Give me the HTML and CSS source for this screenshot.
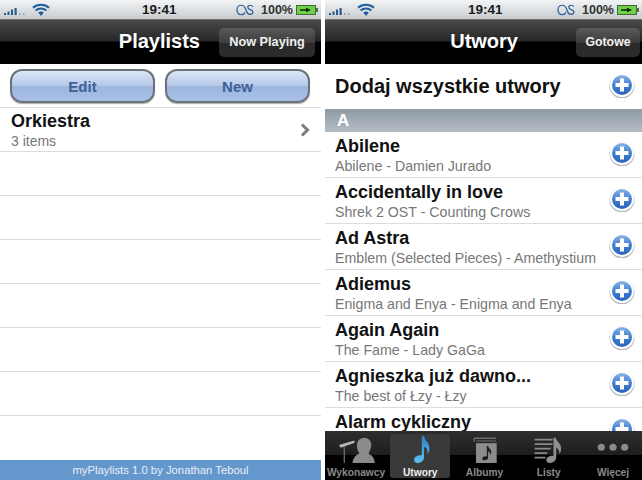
FILE: index.html
```html
<!DOCTYPE html>
<html lang="pl">
<head>
<meta charset="UTF-8">
<title>myPlaylists</title>
<link rel="stylesheet" href="styles.css">
</head>
<body>
<svg class="defs" width="0" height="0">
<defs>
<linearGradient id="plusFill" x1="0" y1="0" x2="0" y2="1">
<stop offset="0" stop-color="#8fb4e6"/>
<stop offset="0.5" stop-color="#3f7fd4"/>
<stop offset="1" stop-color="#2a63b8"/>
</linearGradient>
<linearGradient id="noteFill" x1="0" y1="0" x2="0" y2="1">
<stop offset="0" stop-color="#2f7fc4"/>
<stop offset="1" stop-color="#5cc4f2"/>
</linearGradient>
<symbol id="plus" viewBox="0 0 26 26">
<circle cx="13" cy="14" r="12.5" fill="#b4b8bd"/>
<circle cx="13" cy="13" r="12" fill="#fff"/>
<circle cx="13" cy="13" r="10" fill="url(#plusFill)"/>
<path d="M11 6.500h4V11h4.500v4H15v4.500h-4V15H6.500v-4H11z" fill="#fff"/>
</symbol>
<symbol id="signal" viewBox="0 0 24 8">
<path d="M1 6h2v2H1zM4.500 4.500h2V8h-2zM8 2.500h2V8H8zM11.500 1h2.200v7h-2.200z" fill="#2a5a8c"/>
<path d="M16 6.500h1.500V8H16zM20 6.500h1.500V8H20z" fill="#7a92aa"/>
</symbol>
<symbol id="wifi" viewBox="0 0 18 13">
<path d="M9 13 6.200 9.600a4.500 4.500 0 0 1 5.600 0z" fill="#1f5f9c"/>
<path d="M1 4.800a12 12 0 0 1 16 0M3.600 7.600a8 8 0 0 1 10.800 0" fill="none" stroke="#1f5f9c" stroke-width="2"/>
</symbol>
<symbol id="lastfm" viewBox="0 0 20 12">
<path d="M9.500 8.500C8.600 10.300 7.200 11 5.600 11 3 11 1 9.100 1 6s2-5 4.600-5c3.900 0 4 3 5.500 6.500 .7 1.800 1.900 3 3.500 3 1.700 0 3.200-.7 3.200-2.400 0-3-5.400-2-5.400-5C12.400 1.800 13.600 1 15 1c1.300 0 2.200.5 2.800 1.600" fill="none" stroke="#2a5f9a" stroke-width="1.300"/>
</symbol>
<symbol id="battery" viewBox="0 0 22 10">
<rect x="0.500" y="0.500" width="19" height="9" fill="#6fd04a" stroke="#3f6a36"/>
<rect x="20" y="3" width="2" height="4" fill="#55704e"/>
<path d="M4 4.200h6V2.800l5 2.200-5 2.200V5.800H4z" fill="#10240c"/>
</symbol>
<symbol id="chevron" viewBox="0 0 10 14">
<path d="M2 1.500 7.500 7 2 12.500" fill="none" stroke="#7c7c7c" stroke-width="3"/>
</symbol>
</defs>
</svg>

<div class="screens">
  <section class="phone phone-left">
    <div class="status">
      <svg class="ic-signal"><use href="#signal"/></svg>
      <svg class="ic-wifi"><use href="#wifi"/></svg>
      <span class="clock">19:41</span>
      <svg class="ic-lastfm"><use href="#lastfm"/></svg>
      <span class="percent">100%</span>
      <svg class="ic-battery"><use href="#battery"/></svg>
    </div>
    <header class="nav">
      <span class="nav-title title-playlists">Playlists</span>
      <button class="nav-btn btn-playing">Now Playing</button>
    </header>
    <div class="actions">
      <button class="action-btn">Edit</button>
      <button class="action-btn">New</button>
    </div>
    <div class="playlist-list">
      <div class="playlist-row first-row">
        <div class="row-text">
          <div class="row-title">Orkiestra</div>
          <div class="row-sub">3 items</div>
        </div>
        <svg class="ic-chevron"><use href="#chevron"/></svg>
      </div>
      <div class="playlist-row"></div>
      <div class="playlist-row"></div>
      <div class="playlist-row"></div>
      <div class="playlist-row"></div>
      <div class="playlist-row"></div>
      <div class="playlist-row"></div>
    </div>
    <footer class="credit">myPlaylists 1.0 by Jonathan Teboul</footer>
  </section>

  <section class="phone phone-right">
    <div class="status">
      <svg class="ic-signal"><use href="#signal"/></svg>
      <svg class="ic-wifi"><use href="#wifi"/></svg>
      <span class="clock">19:41</span>
      <svg class="ic-lastfm"><use href="#lastfm"/></svg>
      <span class="percent">100%</span>
      <svg class="ic-battery"><use href="#battery"/></svg>
    </div>
    <header class="nav">
      <span class="nav-title title-utwory">Utwory</span>
      <button class="nav-btn btn-done">Gotowe</button>
    </header>
    <div class="track-list">
      <div class="add-all">
        <span class="add-all-text">Dodaj wszystkie utwory</span>
        <svg class="ic-plus"><use href="#plus"/></svg>
      </div>
      <div class="section-head">A</div>
      <div class="track">
        <div class="row-text"><div class="track-title">Abilene</div><div class="track-sub">Abilene - Damien Jurado</div></div>
        <svg class="ic-plus"><use href="#plus"/></svg>
      </div>
      <div class="track">
        <div class="row-text"><div class="track-title">Accidentally in love</div><div class="track-sub">Shrek 2 OST - Counting Crows</div></div>
        <svg class="ic-plus"><use href="#plus"/></svg>
      </div>
      <div class="track">
        <div class="row-text"><div class="track-title">Ad Astra</div><div class="track-sub">Emblem (Selected Pieces) - Amethystium</div></div>
        <svg class="ic-plus"><use href="#plus"/></svg>
      </div>
      <div class="track">
        <div class="row-text"><div class="track-title">Adiemus</div><div class="track-sub">Enigma and Enya - Enigma and Enya</div></div>
        <svg class="ic-plus"><use href="#plus"/></svg>
      </div>
      <div class="track">
        <div class="row-text"><div class="track-title">Again Again</div><div class="track-sub">The Fame - Lady GaGa</div></div>
        <svg class="ic-plus"><use href="#plus"/></svg>
      </div>
      <div class="track">
        <div class="row-text"><div class="track-title">Agnieszka już dawno...</div><div class="track-sub">The best of Łzy - Łzy</div></div>
        <svg class="ic-plus"><use href="#plus"/></svg>
      </div>
      <div class="track">
        <div class="row-text"><div class="track-title">Alarm cykliczny</div><div class="track-sub"></div></div>
        <svg class="ic-plus"><use href="#plus"/></svg>
      </div>
    </div>
    <nav class="tabbar">
      <div class="tab">
        <svg class="tab-icon" viewBox="0 0 44 30">
          <path d="M18 30c1-7 5-9 8-11-2-2-3-5-3-8 0-5 3-9 8-9s8 4 8 8c0 3-1 5-2 7l-1 3c3 1 6 3 7 10z" fill="#8a8a8a"/>
          <path d="M3 10l17-5 .6 2.500L5 13z" fill="#b5b5b5"/>
          <path d="M9 12v18" stroke="#6a6a6a" stroke-width="1.500"/>
        </svg>
        <span class="tab-label">Wykonawcy</span>
      </div>
      <div class="tab tab-active">
        <svg class="tab-icon" viewBox="0 0 44 30">
          <path d="M24 0h2.500c.5 5 6 7 6 14 0 3-1 5-2 6 .5-4-1-7-4-8v12c0 4-4 6-7 6-3 0-4-2-4-4 0-3 4-5 8.500-4.500z" fill="url(#noteFill)"/>
        </svg>
        <span class="tab-label">Utwory</span>
      </div>
      <div class="tab">
        <svg class="tab-icon" viewBox="0 0 44 30">
          <path d="M10 2.500h24M10 2.500v4" fill="none" stroke="#6f6f6f" stroke-width="1.500"/>
          <path d="M12.500 5.500h21.500" stroke="#5a5a5a" stroke-width="1.500"/>
          <rect x="12" y="8" width="23" height="22" fill="#8c8c8c"/>
          <path d="M24 11h1.500c.3 2.500 3.500 3.500 3.500 7 0 1-.4 2-1 3 0-2-1-3.500-2.500-4v7c0 2-2 3-4 3s-2.500-1-2.500-2c0-2 2.500-3 5-2.500z" fill="#1c1c1c"/>
        </svg>
        <span class="tab-label">Albumy</span>
      </div>
      <div class="tab">
        <svg class="tab-icon" viewBox="0 0 44 30">
          <path d="M6 4h20M6 9h20M6 14h18M6 19h14M6 24h12" stroke="#8a8a8a" stroke-width="2"/>
          <path d="M27 2h2.500c.5 4 6 6 6 12 0 3-1 5-2 6 .5-3-1-6-3.500-7v11c0 3.500-3.500 6-7 6-3 0-4-1.500-4-3.500 0-3 4-5 8-4.500z" fill="#8f8f8f"/>
        </svg>
        <span class="tab-label">Listy</span>
      </div>
      <div class="tab">
        <svg class="tab-icon" viewBox="0 0 44 30">
          <circle cx="9" cy="12.500" r="4" fill="#8a8a8a"/>
          <circle cx="22" cy="12.500" r="4" fill="#8a8a8a"/>
          <circle cx="35" cy="12.500" r="4" fill="#8a8a8a"/>
        </svg>
        <span class="tab-label">Więcej</span>
      </div>
    </nav>
  </section>
</div>
</body>
</html>
```

FILE: styles.css
```css
html, body {
    margin: 0;
    padding: 0;
    background-color: #fff;
}
body {
    font-family: "Liberation Sans", Arial, sans-serif;
    width: 642px;
    height: 480px;
    overflow: hidden;
}
.defs {
    display: block;
    height: 0;
}
.screens {
    display: flex;
    justify-content: space-between;
    height: 480px;
}
.phone {
    display: flex;
    flex-direction: column;
    height: 480px;
    overflow: hidden;
    background-color: #fff;
}
.phone-left {
    width: 321px;
}
.phone-right {
    width: 317px;
}

/* status bar */
.status {
    display: flex;
    align-items: center;
    flex: 0 0 19px;
    height: 19px;
    background: linear-gradient(#f2f4f5, #c9cdd0);
    border-bottom: 1px solid #6d7174;
    color: #1c1c1c;
}
.ic-signal {
    width: 24px;
    height: 8px;
    margin: 2px 0 0 3px;
    flex: none;
}
.ic-wifi {
    width: 18px;
    height: 13px;
    margin-left: 5px;
    flex: none;
}
.clock {
    font-size: 13.500px;
    font-weight: bold;
    margin-left: 92px;
    width: 54px;
}
.ic-lastfm {
    width: 19px;
    height: 12px;
    margin-left: 40px;
    flex: none;
}
.percent {
    font-size: 12.500px;
    font-weight: bold;
    margin-left: 6px;
    color: #333;
}
.ic-battery {
    width: 22px;
    height: 10px;
    margin-left: 3px;
    flex: none;
}
.phone-right .clock {
    margin-left: 93px;
}
.phone-right .ic-lastfm {
    margin-left: 35px;
}

/* nav bar */
.nav {
    display: flex;
    align-items: center;
    justify-content: flex-end;
    flex: 0 0 44px;
    height: 44px;
    background: linear-gradient(#4a4a4a 0, #262626 48%, #000 50%, #000 100%);
}
.nav-title {
    color: #fff;
    font-size: 20px;
    font-weight: bold;
    margin-bottom: 2px;
}
.title-playlists {
    margin-right: 19px;
}
.title-utwory {
    margin-right: 58px;
}
.nav-btn {
    font-family: inherit;
    font-size: 12.700px;
    font-weight: bold;
    color: #f0f0f0;
    height: 29px;
    border: none;
    border-radius: 5px;
    padding: 0;
    background: linear-gradient(#5a5a5a, #3c3c3c 50%, #2a2a2a 52%, #2c2c2c);
}
.btn-playing {
    width: 96px;
    margin-right: 6px;
}
.btn-done {
    width: 64px;
    margin-right: 2px;
    font-size: 12.300px;
}

/* left screen */
.actions {
    display: flex;
    gap: 10px;
    padding: 5px 11px 4px 10px;
    border-bottom: 1px solid #ddd;
    flex: none;
}
.action-btn {
    flex: 1;
    height: 34px;
    font-family: inherit;
    font-size: 15px;
    font-weight: bold;
    color: #3f5f94;
    border: 2px solid #6b7278;
    border-radius: 12px;
    padding: 0;
    box-shadow: 0 1px 1px #aaa;
    background: linear-gradient(#dce6f6, #b4c8e8 50%, #9cb6e0 52%, #a8c0e6);
}
.playlist-list {
    flex: 1;
    overflow: hidden;
}
.playlist-row {
    display: flex;
    align-items: center;
    justify-content: space-between;
    height: 43px;
    border-bottom: 1px solid #ddd;
    padding: 0 11px;
}
.first-row {
    height: 43px;
}
.row-title {
    font-size: 18px;
    font-weight: bold;
    color: #111;
    line-height: 22px;
}
.row-sub {
    font-size: 14px;
    color: #777;
    line-height: 18px;
}
.ic-chevron {
    width: 10px;
    height: 14px;
    flex: none;
}
.credit {
    flex: 0 0 20px;
    height: 20px;
    line-height: 21px;
    background-color: #6497cc;
    color: #e8eef6;
    font-size: 11.300px;
    text-align: center;
}

/* right screen */
.track-list {
    flex: 1;
    overflow: hidden;
}
.add-all {
    display: flex;
    align-items: center;
    justify-content: space-between;
    height: 45px;
    padding: 0 7px 0 10px;
}
.add-all-text {
    font-size: 20px;
    font-weight: bold;
    color: #111;
}
.ic-plus {
    width: 26px;
    height: 26px;
    flex: none;
    margin-bottom: 3px;
}
.section-head {
    height: 23px;
    line-height: 23px;
    padding-left: 12px;
    font-size: 17px;
    font-weight: bold;
    color: #fff;
    background: linear-gradient(#909ba5, #b4bcc4);
}
.track {
    display: flex;
    align-items: center;
    justify-content: space-between;
    height: 45px;
    border-bottom: 1px solid #ddd;
    padding: 0 7px 0 10px;
}
.track-title {
    font-size: 18px;
    font-weight: bold;
    color: #111;
    line-height: 22px;
}
.track-sub {
    font-size: 14.200px;
    color: #777;
    line-height: 18px;
    min-height: 18px;
    white-space: nowrap;
}

/* tab bar */
.tabbar {
    display: flex;
    flex: 0 0 49px;
    height: 49px;
    gap: 4.250px;
    padding: 3px 0 0 1px;
    box-sizing: border-box;
    background: linear-gradient(#2e2e2e 0, #1e1e1e 48%, #000 50%, #000 100%);
}
.tab {
    flex: 0 0 60px;
    display: flex;
    flex-direction: column;
    align-items: center;
    height: 44px;
    border-radius: 3px;
}
.tab-active {
    background-color: #3a3a3a;
}
.tab-icon {
    width: 40px;
    height: 27px;
    margin-top: 2px;
    flex: none;
}
.tab-label {
    font-size: 10.200px;
    font-weight: bold;
    color: #8a8a8a;
    margin-top: 4px;
    white-space: nowrap;
}
.tab-active .tab-label {
    color: #f0f0f0;
}
```
